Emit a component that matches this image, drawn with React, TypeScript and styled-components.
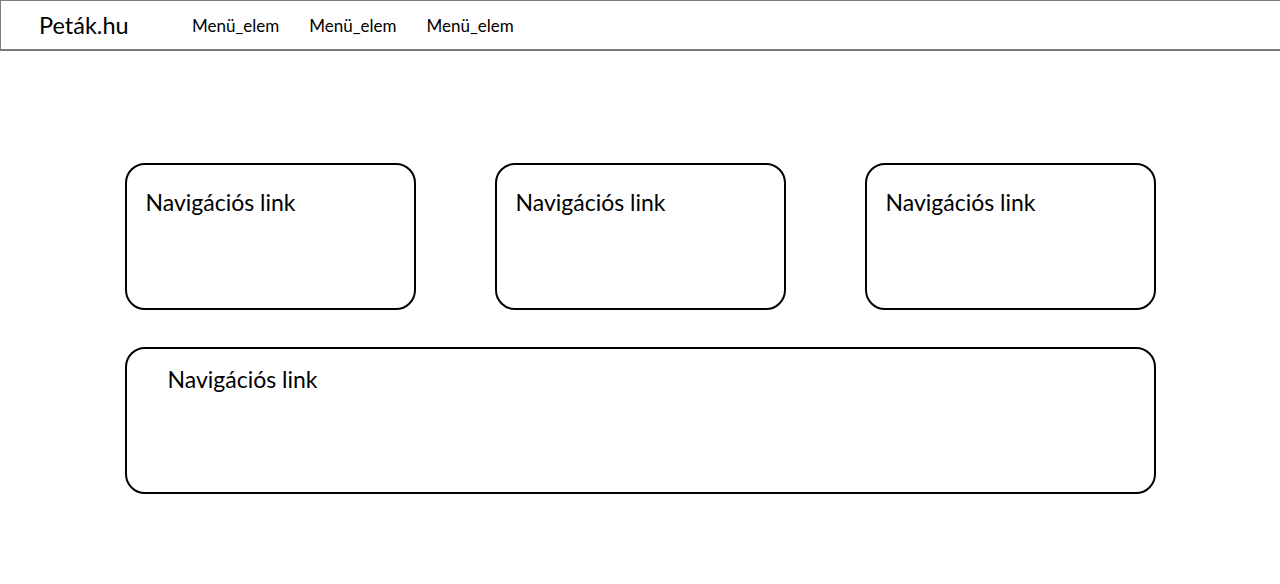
import React from "react";
import styled, { createGlobalStyle } from "styled-components";

const GlobalStyle = createGlobalStyle`
  html, body {
    margin: 0;
    padding: 0;
    background: #ffffff;
  }
  body {
    font-family: Lato, "Noto Sans", sans-serif;
    color: #000;
  }
`;

const Header = styled.header`
  display: flex;
  align-items: center;
  height: 51px;
  box-sizing: border-box;
  border-top: 1px solid #7b7b7b;
  border-left: 1px solid #7b7b7b;
  border-bottom: 2px solid #7b7b7b;
  padding-left: 38px;
`;

const Brand = styled.div`
  font-size: 23.5px;
  width: 153px;
`;

const Menu = styled.nav`
  display: flex;
  gap: 30px;
`;

const MenuItem = styled.a`
  font-size: 17px;
  color: #000;
  text-decoration: none;
`;

const Main = styled.main`
  width: 1031px;
  margin: 112px auto 0;
  display: flex;
  flex-direction: column;
  gap: 37px;
`;

const Row = styled.div`
  display: grid;
  grid-template-columns: repeat(3, 1fr);
  gap: 79px;
`;

const Card = styled.a<{ $wide?: boolean }>`
  display: block;
  box-sizing: border-box;
  height: 147px;
  border: 2px solid #000;
  border-radius: 20px;
  padding: ${({ $wide }) => ($wide ? "16px 41px" : "23px 19px")};
  font-size: 23px;
  line-height: 28px;
  color: #000;
  text-decoration: none;
`;

export default function App() {
  return (
    <>
      <GlobalStyle />
      <Header>
        <Brand>Peták.hu</Brand>
        <Menu>
          <MenuItem>Menü_elem</MenuItem>
          <MenuItem>Menü_elem</MenuItem>
          <MenuItem>Menü_elem</MenuItem>
        </Menu>
      </Header>
      <Main>
        <Row>
          <Card>Navigációs link</Card>
          <Card>Navigációs link</Card>
          <Card>Navigációs link</Card>
        </Row>
        <Card $wide>Navigációs link</Card>
      </Main>
    </>
  );
}
